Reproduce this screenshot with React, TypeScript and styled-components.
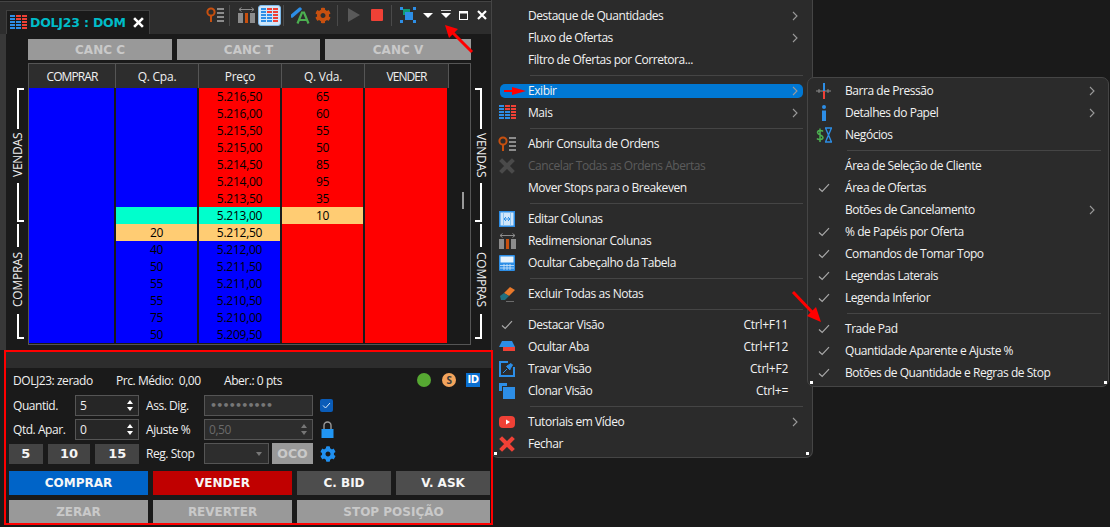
import React from "react";
import styled, { createGlobalStyle } from "styled-components";
import { FaCog } from "react-icons/fa";

const UI_FONT = `"Open Sans", "Noto Sans", sans-serif`;
const BOLD_FONT = `"DejaVu Sans", Verdana, sans-serif`;

const GlobalStyle = createGlobalStyle`
    html, body {
        margin: 0;
        padding: 0;
        background: #1a1a1a;
    }
    * {
        box-sizing: border-box;
    }
`;

const Desktop = styled.div`
    position: relative;
    width: 1110px;
    height: 527px;
    overflow: hidden;
    background: #1a1a1a;
    color: #f2f2f2;
    font-family: ${UI_FONT};
    font-size: 12px;
    letter-spacing: -0.45px;
`;

const Window = styled.div`
    width: 493px;
    display: flex;
    flex-direction: column;
`;

const TitleBar = styled.div`
    height: 34px;
    display: flex;
    align-items: flex-end;
    padding-left: 6px;
    background: #2d2d2d;
    border-top: 1px solid #1c1c1c;
    box-shadow: inset 0 1px 0 #444444;
`;

const Tab = styled.div`
    width: 144px;
    height: 24px;
    display: flex;
    align-items: center;
    padding-left: 3px;
    gap: 3px;
    background: #1a1a1a;
    border: 1px solid #3f3f3f;
    border-bottom: none;
    color: #00bcc8;
    font-family: ${BOLD_FONT};
    font-weight: 700;
    font-size: 12.5px;
    letter-spacing: -0.2px;
    white-space: nowrap;
`;

const TabClose = styled.span`
    display: flex;
    margin-left: 4px;
`;

const Toolbar = styled.div`
    display: flex;
    align-items: center;
    height: 33px;
    margin-left: 54px;
    padding-bottom: 5px;
`;

const ToolSlot = styled.div<{ $w: number; $active?: boolean }>`
    width: ${(p) => p.$w}px;
    height: 21px;
    flex: none;
    display: flex;
    align-items: center;
    justify-content: center;
    border-radius: 3px;
    ${(p) => p.$active && "background: #cfe6fa; border: 1px solid #7db8e8;"}
`;

const ToolSep = styled.div<{ $w: number }>`
    width: ${(p) => p.$w}px;
    flex: none;
    height: 21px;
    display: flex;
    justify-content: center;

    &::after {
        content: "";
        width: 1px;
        background: #4a4a4a;
    }
`;

const DomArea = styled.div`
    height: 316px;
    display: flex;
    border-left: 6px solid #383838;
    padding-left: 2px;
    background: #1a1a1a;
`;

const Legend = styled.div<{ $w: number }>`
    width: ${(p) => p.$w}px;
    flex: none;
    padding-top: 54px;
    display: flex;
    flex-direction: column;
    align-items: center;
`;

const LegendBar = styled.div<{ $h: number; $foot?: string; $side: "left" | "right" }>`
    position: relative;
    width: 2px;
    height: ${(p) => p.$h}px;
    background: #ffffff;

    ${(p) =>
        p.$foot &&
        `&::after {
            content: "";
            position: absolute;
            ${p.$foot}: 0;
            ${p.$side === "left" ? "left: 0" : "right: 0"};
            width: 7px;
            height: 2px;
            background: #ffffff;
        }`}
`;

const LegendText = styled.div<{ $flip?: boolean; $h: number }>`
    writing-mode: vertical-rl;
    height: ${(p) => p.$h}px;
    margin: 4px 0 6px;
    line-height: 12px;
    text-align: center;
    white-space: nowrap;
    letter-spacing: -0.25px;
    color: #f0f0f0;
    ${(p) => p.$flip && "transform: rotate(180deg);"}
`;

const LegendGap = styled.div`
    height: 2px;
    flex: none;
`;

const Center = styled.div`
    width: 443px;
    flex: none;
    padding-top: 5px;
    display: flex;
    flex-direction: column;
`;

const CancelRow = styled.div`
    display: flex;
    gap: 5px;
    height: 21px;
    margin-bottom: 3px;
`;

const CancelButton = styled.div<{ $w: number }>`
    width: ${(p) => p.$w}px;
    display: flex;
    align-items: center;
    justify-content: center;
    background: #999999;
    color: #c9c9c9;
    font-family: ${BOLD_FONT};
    font-weight: 700;
    font-size: 12px;
    letter-spacing: 0;
`;

const Table = styled.div`
    height: 282px;
    border: 1px solid #555555;
    display: grid;
    grid-template-columns: 87px 83px 83px 83px 84px 1fr;
    grid-template-rows: 24px repeat(15, 17px);
`;

const HeadCell = styled.div<{ $plain?: boolean; $caps?: boolean }>`
    display: flex;
    align-items: center;
    justify-content: center;
    background: ${(p) => (p.$plain ? "#1a1a1a" : "#2d2d2d")};
    border-right: 1px solid ${(p) => (p.$plain ? "transparent" : "#555555")};
    color: #f0f0f0;
    letter-spacing: ${(p) => (p.$caps ? "-0.9px" : "-0.25px")};
`;

const DataCell = styled.div<{ $bg: string; $gap?: number }>`
    display: flex;
    align-items: center;
    justify-content: center;
    background: ${(p) => p.$bg};
    background-clip: padding-box;
    border-right: ${(p) => p.$gap ?? 2}px solid #1a1a1a;
    color: #000000;
    line-height: 17px;
    letter-spacing: -0.25px;
`;

const ScrollTrack = styled.div`
    grid-column: 6;
    grid-row: 2 / 17;
    padding: 104px 0 0 13px;
`;

const ScrollHandle = styled.div`
    width: 2px;
    height: 17px;
    background: #999999;
`;

const TradePad = styled.div`
    position: relative;
    z-index: 3;
    width: 489px;
    height: 175px;
    margin-left: 4px;
    border: 2px solid #ff0000;
    display: flex;
    flex-direction: column;
`;

const PadHeader = styled.div`
    height: 16px;
    flex: none;
    background: #2d2d2d;
`;

const StatusRow = styled.div`
    height: 24px;
    flex: none;
    display: flex;
    align-items: center;
    padding: 0 11px 0 7px;
`;

const StatusText = styled.span<{ $w: number }>`
    width: ${(p) => p.$w}px;
    white-space: nowrap;
    color: #f0f0f0;
`;

const StatusIcons = styled.div`
    margin-left: auto;
    display: flex;
    align-items: center;
    gap: 10px;
`;

const GreenDot = styled.div`
    width: 14px;
    height: 14px;
    border-radius: 50%;
    background: #56a832;
`;

const CoinDot = styled.div`
    width: 14px;
    height: 14px;
    border-radius: 50%;
    background: #f3a45c;
    color: #3b3b3b;
    font-size: 10px;
    font-weight: 700;
    line-height: 14px;
    text-align: center;
    margin-left: 1px;
`;

const IdBadge = styled.div`
    width: 14px;
    height: 14px;
    background: #0a6fd0;
    color: #ffffff;
    font-family: ${BOLD_FONT};
    font-size: 10px;
    font-weight: 700;
    line-height: 14px;
    text-align: center;
`;

const FormGrid = styled.div`
    margin-top: 3px;
    padding-left: 7px;
    display: grid;
    grid-template-columns: 62px 64px 7px 58px 109px 7px 20px;
    grid-template-rows: repeat(3, 21px);
    row-gap: 3px;
    align-items: center;
`;

const FieldLabel = styled.div<{ $col: number }>`
    grid-column: ${(p) => p.$col};
    white-space: nowrap;
    color: #f0f0f0;
`;

const Field = styled.div<{ $col?: number; $disabled?: boolean }>`
    grid-column: ${(p) => p.$col ?? "auto"};
    height: 21px;
    display: flex;
    align-items: center;
    justify-content: space-between;
    padding: 0 4px;
    background: ${(p) => (p.$disabled ? "#2d2d2d" : "#262626")};
    border: 1px solid #555555;
    color: ${(p) => (p.$disabled ? "#6a6a6a" : "#f0f0f0")};
`;

const PasswordDots = styled.span`
    padding-left: 1px;
    color: #777777;
    font-family: ${BOLD_FONT};
    font-size: 11px;
    font-weight: 700;
    letter-spacing: -0.8px;
    line-height: 1;
`;

const SpinArrows = styled.div`
    display: flex;
    flex-direction: column;
    gap: 3px;
    margin-right: 1px;
`;

const SpinArrow = styled.div<{ $down?: boolean; $dim?: boolean }>`
    width: 0;
    height: 0;
    border-left: 3.5px solid transparent;
    border-right: 3.5px solid transparent;
    ${(p) =>
        p.$down
            ? `border-top: 4px solid ${p.$dim ? "#777777" : "#ffffff"};`
            : `border-bottom: 4px solid ${p.$dim ? "#777777" : "#ffffff"};`}
`;

const QuickRow = styled.div`
    grid-column: 1 / 3;
    margin-left: -4px;
    display: flex;
    gap: 5px;
    height: 20px;
`;

const QuickButton = styled.div<{ $w: number }>`
    width: ${(p) => p.$w}px;
    display: flex;
    align-items: center;
    justify-content: center;
    background: #444444;
    color: #f4f4f4;
    font-family: ${BOLD_FONT};
    font-weight: 700;
    font-size: 13px;
    letter-spacing: 0;
`;

const StopWrap = styled.div`
    grid-column: 5;
    display: flex;
    gap: 3px;
    height: 21px;
`;

const SelectBox = styled.div`
    width: 65px;
    display: flex;
    align-items: center;
    justify-content: flex-end;
    padding-right: 6px;
    background: #2d2d2d;
    border: 1px solid #555555;
`;

const OcoButton = styled.div`
    flex: 1;
    display: flex;
    align-items: center;
    justify-content: center;
    background: #999999;
    color: #c9c9c9;
    font-family: ${BOLD_FONT};
    font-weight: 700;
    font-size: 12.5px;
    letter-spacing: 0;
`;

const ExtraSlot = styled.div<{ $pad?: number }>`
    grid-column: 7;
    display: flex;
    justify-content: flex-start;
    align-items: center;
    padding-left: ${(p) => p.$pad ?? 0}px;
`;

const CheckBox = styled.div`
    width: 13px;
    height: 13px;
    display: flex;
    align-items: center;
    justify-content: center;
    border-radius: 2px;
    background: #0a5cb8;
`;

const ActionRow = styled.div<{ $h: number; $top: number }>`
    display: flex;
    gap: 5px;
    height: ${(p) => p.$h}px;
    margin-top: ${(p) => p.$top}px;
    padding-left: 3px;
`;

const ActionButton = styled.div<{ $w: number; $bg: string; $fg?: string }>`
    width: ${(p) => p.$w}px;
    display: flex;
    align-items: center;
    justify-content: center;
    background: ${(p) => p.$bg};
    color: ${(p) => p.$fg ?? "#f6f6f6"};
    font-family: ${BOLD_FONT};
    font-weight: 700;
    font-size: 12px;
    letter-spacing: 0;
    white-space: nowrap;
`;

const Menu = styled.div`
    position: absolute;
    z-index: 2;
    left: 491px;
    top: 0;
    width: 322px;
    height: 458px;
    padding-top: 5px;
    background: #2b2b2b;
    border: 1px solid #454545;
    border-top: none;
    border-radius: 0 0 7px 7px;
`;

const SubMenu = styled.div`
    position: absolute;
    z-index: 2;
    left: 807px;
    top: 77px;
    width: 302px;
    height: 310px;
    padding-top: 2px;
    background: #2b2b2b;
    border: 1px solid #454545;
    border-radius: 7px;
`;

const CornerDot = styled.div<{ $right?: number; $left?: number }>`
    position: absolute;
    bottom: 2px;
    ${(p) => (p.$left !== undefined ? `left: ${p.$left}px;` : `right: ${p.$right}px;`)}
    width: 3px;
    height: 3px;
    background: #ffffff;
`;

const MenuItem = styled.div<{ $active?: boolean; $disabled?: boolean; $ml: number; $mr: number }>`
    position: relative;
    isolation: isolate;
    height: 22px;
    padding-bottom: 1px;
    margin: 0 ${(p) => p.$mr}px 0 ${(p) => p.$ml}px;
    display: flex;
    align-items: center;
    white-space: nowrap;
    color: ${(p) => (p.$disabled ? "#5c5c5c" : "#f2f2f2")};

    ${(p) =>
        p.$active &&
        `&::before {
            content: "";
            position: absolute;
            z-index: -1;
            inset: 4px 0;
            border-radius: 5px;
            background: #0078d4;
        }`}
`;

const IconSlot = styled.span`
    width: 14px;
    margin-right: 14px;
    flex: none;
    display: flex;
    align-items: center;
    justify-content: center;

    svg {
        flex: none;
    }
`;

const Shortcut = styled.span`
    margin-left: auto;
    margin-right: 15px;
    letter-spacing: -0.25px;
`;

const Chevron = styled.span`
    margin-left: auto;
    margin-right: 5px;
    display: flex;
`;

const Separator = styled.div<{ $ml: number; $mr: number }>`
    height: 9px;
    margin: 0 ${(p) => p.$mr}px 0 ${(p) => p.$ml}px;
    display: flex;
    align-items: center;

    &::after {
        content: "";
        flex: 1;
        height: 1px;
        background: #454545;
    }
`;

const ArrowLayer = styled.svg`
    position: absolute;
    z-index: 4;
    left: 0;
    top: 0;
    pointer-events: none;
`;

const BLUE = "#2d8ee6";
const RED = "#ef4136";
const ORANGE = "#c8500f";
const GREY = "#8c8c8c";

function TableIcon() {
    const rows = [0, 1, 2, 3, 4];
    return (
        <svg width="17" height="15" viewBox="0 0 17 15">
            {rows.map((r) => (
                <g key={r}>
                    <rect x="0" y={r * 3} width="5" height="2" fill={BLUE} />
                    <rect x="6" y={r * 3} width="5" height="2" fill={r < 2 ? RED : BLUE} />
                    <rect x="12" y={r * 3} width="5" height="2" fill={RED} />
                </g>
            ))}
        </svg>
    );
}

function OrdersIcon() {
    return (
        <svg width="18" height="16" viewBox="0 0 18 16">
            <circle cx="5" cy="5" r="3.6" fill="none" stroke={ORANGE} strokeWidth="2" />
            <rect x="4" y="8" width="2" height="7" fill={ORANGE} />
            <rect x="11" y="1" width="7" height="2" fill={GREY} />
            <rect x="11" y="5" width="7" height="2" fill={GREY} />
            <rect x="11" y="9" width="7" height="2" fill={GREY} />
            <rect x="11" y="13" width="7" height="2" fill={GREY} />
        </svg>
    );
}

function ResizeIcon() {
    return (
        <svg width="17" height="16" viewBox="0 0 17 16">
            <path d="M1 2.5H16M1 2.5l2.5-2M1 2.5l2.5 2M16 2.5l-2.5-2M16 2.5l-2.5 2" stroke={GREY} fill="none" />
            <rect x="0" y="6" width="5" height="10" fill={GREY} />
            <rect x="7" y="6" width="3" height="10" fill={ORANGE} />
            <rect x="12" y="6" width="5" height="10" fill={GREY} />
        </svg>
    );
}

function PenAIcon() {
    return (
        <svg width="19" height="17" viewBox="0 0 19 17">
            <path d="M1 9L9 2" stroke={BLUE} strokeWidth="3.4" strokeLinecap="round" />
            <path d="M6.5 16.5L11 5.5H13L17.5 16.5M8.5 13H15.5" stroke="#4caf50" strokeWidth="2.2" fill="none" />
        </svg>
    );
}

function PlayIcon() {
    return (
        <svg width="12" height="14" viewBox="0 0 12 14">
            <polygon points="0,0 12,7 0,14" fill="#595959" />
        </svg>
    );
}

function StopIcon() {
    return (
        <svg width="12" height="12" viewBox="0 0 12 12">
            <rect width="12" height="12" rx="1" fill={RED} />
        </svg>
    );
}

function SelectIcon() {
    return (
        <svg width="16" height="16" viewBox="0 0 16 16">
            <rect x="0" y="0" width="3" height="3" fill={BLUE} />
            <rect x="13" y="0" width="3" height="3" fill={BLUE} />
            <rect x="0" y="13" width="3" height="3" fill={BLUE} />
            <rect x="13" y="13" width="3" height="3" fill={BLUE} />
            <rect x="3" y="2" width="7" height="6" fill="#0f9d76" />
            <rect x="5" y="5" width="8" height="8" fill={BLUE} />
        </svg>
    );
}

function Caret({ bar }: { bar?: boolean }) {
    return (
        <svg width="10" height="10" viewBox="0 0 10 10">
            {bar && <rect x="0" y="0" width="10" height="1" fill="#cfcfcf" />}
            <polygon points="0,3 10,3 5,8" fill="#ffffff" />
        </svg>
    );
}

function WindowIcon() {
    return (
        <svg width="9" height="9" viewBox="0 0 9 9">
            <rect width="9" height="9" fill="#ffffff" />
            <rect x="1" y="2.5" width="7" height="5.5" fill="#2d2d2d" />
        </svg>
    );
}

function CrossIcon({ size, color, weight }: { size: number; color: string; weight: number }) {
    return (
        <svg width={size} height={size} viewBox="0 0 10 10">
            <path d="M1 1L9 9M9 1L1 9" stroke={color} strokeWidth={weight} />
        </svg>
    );
}

function FilmIcon() {
    return (
        <svg width="16" height="16" viewBox="0 0 16 16">
            <rect x="0" y="0" width="16" height="16" fill={BLUE} />
            <rect x="1.5" y="1.5" width="13" height="13" fill="#cfe6fa" />
            <rect x="4" y="1.5" width="1" height="13" fill="#8cc4f2" />
            <rect x="11" y="1.5" width="1" height="13" fill="#8cc4f2" />
            <path d="M5 8h6M5 8l2-2M5 8l2 2M11 8l-2-2M11 8l-2 2" stroke={BLUE} fill="none" />
        </svg>
    );
}

function HeaderIcon() {
    return (
        <svg width="16" height="16" viewBox="0 0 16 16">
            <rect x="0" y="0" width="16" height="16" rx="1" fill={BLUE} />
            <rect x="1.5" y="1.5" width="13" height="6" fill="#e8f3fc" />
            <path d="M1 10.5H15M1 13H15M5 9V15M8 9V15M11 9V15" stroke="#cfe6fa" strokeWidth="0.8" />
        </svg>
    );
}

function EraserIcon() {
    return (
        <svg width="17" height="16" viewBox="0 0 17 16">
            <polygon points="5,7 11,1 16,4 10,10" fill="#e8782a" />
            <polygon points="1,10 5,7 10,10 6,14 2,14" fill="#22707f" />
            <rect x="7" y="15" width="8" height="1" fill="#6c6c6c" />
        </svg>
    );
}

function CheckIcon() {
    return (
        <svg width="12" height="10" viewBox="0 0 12 10">
            <path d="M1 5.5L4.2 8.5L11 1.2" stroke="#a8a8a8" strokeWidth="1.2" fill="none" />
        </svg>
    );
}

function HideTabIcon() {
    return (
        <svg width="16" height="11" viewBox="0 0 16 11">
            <polygon points="3,0 13,0 16,6 0,6" fill={BLUE} />
            <rect x="4" y="6" width="12" height="4" fill={RED} />
        </svg>
    );
}

function LockViewIcon() {
    return (
        <svg width="16" height="16" viewBox="0 0 16 16">
            <rect x="1" y="1" width="14" height="14" fill="none" stroke={BLUE} strokeWidth="2" />
            <rect x="9" y="0" width="7" height="6" fill="#2b2b2b" />
            <path d="M4 12L8 8M8 5l4-2.5 1.5 1.5L11 8v1L7.5 5.5z" fill={BLUE} stroke={BLUE} />
        </svg>
    );
}

function CloneIcon() {
    return (
        <svg width="16" height="16" viewBox="0 0 16 16">
            <rect x="0" y="0" width="8" height="8" fill={BLUE} />
            <rect x="3" y="3" width="13" height="13" fill="#2b2b2b" />
            <rect x="4" y="4" width="12" height="12" fill={BLUE} />
        </svg>
    );
}

function VideoIcon() {
    return (
        <svg width="16" height="12" viewBox="0 0 16 12">
            <rect width="16" height="12" rx="4" fill={RED} />
            <polygon points="7,3.5 11,6 7,8.5" fill="#ffffff" />
        </svg>
    );
}

function PressureIcon() {
    return (
        <svg width="16" height="16" viewBox="0 0 16 16">
            <path d="M0 8H15M3 6v4M12 6v4" stroke={GREY} />
            <rect x="7" y="0" width="2" height="8" fill={BLUE} />
            <rect x="7" y="8" width="2" height="8" fill={RED} />
        </svg>
    );
}

function InfoIcon() {
    return (
        <svg width="6" height="16" viewBox="0 0 6 16">
            <circle cx="3" cy="2" r="2" fill={BLUE} />
            <rect x="1" y="5.5" width="4" height="10.5" fill={BLUE} />
        </svg>
    );
}

function TradesIcon() {
    return (
        <svg width="16" height="16" viewBox="0 0 16 16">
            <path d="M7 4.5C6 3 1.5 3 1.5 5.5S7 8 7 10.5S2 13 1 11.5M4 1.5V15" stroke="#4caf50" strokeWidth="1.5" fill="none" />
            <path d="M9 1H16M9 15H16M9.5 1L15.5 15M15.5 1L9.5 15" stroke={BLUE} strokeWidth="1.4" fill="none" />
        </svg>
    );
}

function ChevronIcon() {
    return (
        <svg width="6" height="10" viewBox="0 0 6 10">
            <path d="M1 1L5 5L1 9" stroke="#9a9a9a" strokeWidth="1.1" fill="none" />
        </svg>
    );
}

function LockIcon() {
    return (
        <svg width="13" height="17" viewBox="0 0 13 17">
            <path d="M3 8V4.5a3.5 3.5 0 0 1 7 0V8" stroke="#9a9a9a" strokeWidth="1.4" fill="none" />
            <rect x="0.5" y="8" width="12" height="9" fill="#2196f3" />
        </svg>
    );
}

const ROWS: [string, string, string, string, string][] = [
    ["5.216,50", "", "65", "#ff0000", "#ff0000"],
    ["5.216,00", "", "60", "#ff0000", "#ff0000"],
    ["5.215,50", "", "55", "#ff0000", "#ff0000"],
    ["5.215,00", "", "50", "#ff0000", "#ff0000"],
    ["5.214,50", "", "85", "#ff0000", "#ff0000"],
    ["5.214,00", "", "95", "#ff0000", "#ff0000"],
    ["5.213,50", "", "35", "#ff0000", "#ff0000"],
    ["5.213,00", "", "10", "#00ffcc", "#ffcc73"],
    ["5.212,50", "20", "", "#ffcc73", "#ff0000"],
    ["5.212,00", "40", "", "#0000ff", "#ff0000"],
    ["5.211,50", "50", "", "#0000ff", "#ff0000"],
    ["5.211,00", "55", "", "#0000ff", "#ff0000"],
    ["5.210,50", "55", "", "#0000ff", "#ff0000"],
    ["5.210,00", "75", "", "#0000ff", "#ff0000"],
    ["5.209,50", "50", "", "#0000ff", "#ff0000"],
];

function cpaColor(i: number) {
    if (i === 7) return "#00ffcc";
    if (i === 8) return "#ffcc73";
    return "#0000ff";
}

type Entry =
    | { sep: true }
    | {
          sep?: false;
          label: string;
          icon?: React.ReactNode;
          sub?: boolean;
          key?: string;
          active?: boolean;
          disabled?: boolean;
      };

const check = <CheckIcon />;

const MENU: Entry[] = [
    { label: "Destaque de Quantidades", sub: true },
    { label: "Fluxo de Ofertas", sub: true },
    { label: "Filtro de Ofertas por Corretora..." },
    { sep: true },
    { label: "Exibir", sub: true, active: true },
    { label: "Mais", sub: true, icon: <TableIcon /> },
    { sep: true },
    { label: "Abrir Consulta de Ordens", icon: <OrdersIcon /> },
    { label: "Cancelar Todas as Ordens Abertas", disabled: true, icon: <CrossIcon size={16} color="#4a4a4a" weight={2.6} /> },
    { label: "Mover Stops para o Breakeven" },
    { sep: true },
    { label: "Editar Colunas", icon: <FilmIcon /> },
    { label: "Redimensionar Colunas", icon: <ResizeIcon /> },
    { label: "Ocultar Cabeçalho da Tabela", icon: <HeaderIcon /> },
    { sep: true },
    { label: "Excluir Todas as Notas", icon: <EraserIcon /> },
    { sep: true },
    { label: "Destacar Visão", key: "Ctrl+F11", icon: check },
    { label: "Ocultar Aba", key: "Ctrl+F12", icon: <HideTabIcon /> },
    { label: "Travar Visão", key: "Ctrl+F2", icon: <LockViewIcon /> },
    { label: "Clonar Visão", key: "Ctrl+=", icon: <CloneIcon /> },
    { sep: true },
    { label: "Tutoriais em Vídeo", sub: true, icon: <VideoIcon /> },
    { label: "Fechar", icon: <CrossIcon size={16} color={RED} weight={2.6} /> },
];

const SUBMENU: Entry[] = [
    { label: "Barra de Pressão", sub: true, icon: <PressureIcon /> },
    { label: "Detalhes do Papel", sub: true, icon: <InfoIcon /> },
    { label: "Negócios", icon: <TradesIcon /> },
    { sep: true },
    { label: "Área de Seleção de Cliente" },
    { label: "Área de Ofertas", icon: check },
    { label: "Botões de Cancelamento", sub: true },
    { label: "% de Papéis por Oferta", icon: check },
    { label: "Comandos de Tomar Topo", icon: check },
    { label: "Legendas Laterais", icon: check },
    { label: "Legenda Inferior", icon: check },
    { sep: true },
    { label: "Trade Pad", icon: check },
    { label: "Quantidade Aparente e Ajuste %", icon: check },
    { label: "Botões de Quantidade e Regras de Stop", icon: check },
];

function MenuEntries({ items, ml, mr, sepMl, sepMr }: { items: Entry[]; ml: number; mr: number; sepMl: number; sepMr: number }) {
    return (
        <>
            {items.map((item, i) =>
                item.sep ? (
                    <Separator key={i} $ml={sepMl} $mr={sepMr} />
                ) : (
                    <MenuItem key={i} $ml={ml} $mr={mr} $active={item.active} $disabled={item.disabled}>
                        <IconSlot>{item.icon}</IconSlot>
                        {item.label}
                        {item.key && <Shortcut>{item.key}</Shortcut>}
                        {item.sub && (
                            <Chevron>
                                <ChevronIcon />
                            </Chevron>
                        )}
                    </MenuItem>
                )
            )}
        </>
    );
}

function SideLegend({ side, width }: { side: "left" | "right"; width: number }) {
    const flip = side === "left";
    return (
        <Legend $w={width}>
            <LegendBar $h={41} $side={side} $foot="top" />
            <LegendText $flip={flip} $h={44}>VENDAS</LegendText>
            <LegendBar $h={39} $side={side} $foot="bottom" />
            <LegendGap />
            <LegendBar $h={23} $side={side} />
            <LegendText $flip={flip} $h={57}>COMPRAS</LegendText>
            <LegendBar $h={25} $side={side} $foot="bottom" />
        </Legend>
    );
}

export default function App() {
    return (
        <Desktop>
            <GlobalStyle />
            <Window>
                <TitleBar>
                    <Tab>
                        <TableIcon />
                        DOLJ23 : DOM
                        <TabClose>
                            <CrossIcon size={11} color="#ffffff" weight={2.4} />
                        </TabClose>
                    </Tab>
                    <Toolbar>
                        <ToolSlot $w={21}><OrdersIcon /></ToolSlot>
                        <ToolSep $w={9} />
                        <ToolSlot $w={24}><ResizeIcon /></ToolSlot>
                        <ToolSlot $w={23} $active><TableIcon /></ToolSlot>
                        <ToolSep $w={5} />
                        <ToolSlot $w={29}><PenAIcon /></ToolSlot>
                        <ToolSlot $w={16}><FaCog size={17} color={ORANGE} /></ToolSlot>
                        <ToolSep $w={13} />
                        <ToolSlot $w={20}><PlayIcon /></ToolSlot>
                        <ToolSlot $w={26}><StopIcon /></ToolSlot>
                        <ToolSep $w={3} />
                        <ToolSlot $w={30}><SelectIcon /></ToolSlot>
                        <ToolSlot $w={10}><Caret /></ToolSlot>
                        <ToolSlot $w={25}><Caret bar /></ToolSlot>
                        <ToolSlot $w={10}><WindowIcon /></ToolSlot>
                        <ToolSlot $w={9} />
                        <ToolSlot $w={10}><CrossIcon size={10} color="#ffffff" weight={2.2} /></ToolSlot>
                    </Toolbar>
                </TitleBar>

                <DomArea>
                    <SideLegend side="left" width={20} />
                    <Center>
                        <CancelRow>
                            <CancelButton $w={144}>CANC C</CancelButton>
                            <CancelButton $w={143}>CANC T</CancelButton>
                            <CancelButton $w={146}>CANC V</CancelButton>
                        </CancelRow>
                        <Table>
                            <HeadCell $caps>COMPRAR</HeadCell>
                            <HeadCell>Q. Cpa.</HeadCell>
                            <HeadCell>Preço</HeadCell>
                            <HeadCell>Q. Vda.</HeadCell>
                            <HeadCell $caps>VENDER</HeadCell>
                            <HeadCell $plain />
                            <ScrollTrack>
                                <ScrollHandle />
                            </ScrollTrack>
                            {ROWS.map((r, i) => (
                                <React.Fragment key={r[0]}>
                                    <DataCell $bg="#0000ff" />
                                    <DataCell $bg={cpaColor(i)}>{r[1]}</DataCell>
                                    <DataCell $bg={r[3]}>{r[0]}</DataCell>
                                    <DataCell $bg={r[4]}>{r[2]}</DataCell>
                                    <DataCell $bg="#ff0000" />
                                </React.Fragment>
                            ))}
                        </Table>
                    </Center>
                    <SideLegend side="right" width={19} />
                </DomArea>

                <TradePad>
                    <PadHeader />
                    <StatusRow>
                        <StatusText $w={103}>DOLJ23: zerado</StatusText>
                        <StatusText $w={108}>Prc. Médio:&nbsp; 0,00</StatusText>
                        <StatusText $w={70}>Aber.: 0 pts</StatusText>
                        <StatusIcons>
                            <GreenDot />
                            <CoinDot>S</CoinDot>
                            <IdBadge>ID</IdBadge>
                        </StatusIcons>
                    </StatusRow>
                    <FormGrid>
                        <FieldLabel $col={1}>Quantid.</FieldLabel>
                        <Field $col={2}>
                            5
                            <SpinArrows>
                                <SpinArrow />
                                <SpinArrow $down />
                            </SpinArrows>
                        </Field>
                        <FieldLabel $col={4}>Ass. Dig.</FieldLabel>
                        <Field $col={5} $disabled>
                            <PasswordDots>••••••••••</PasswordDots>
                        </Field>
                        <ExtraSlot>
                            <CheckBox>
                                <svg width="9" height="7" viewBox="0 0 9 7">
                                    <path d="M1 3.5L3.5 6L8 1" stroke="#d8e8f8" fill="none" />
                                </svg>
                            </CheckBox>
                        </ExtraSlot>

                        <FieldLabel $col={1}>Qtd. Apar.</FieldLabel>
                        <Field $col={2}>
                            0
                            <SpinArrows>
                                <SpinArrow />
                                <SpinArrow $down />
                            </SpinArrows>
                        </Field>
                        <FieldLabel $col={4}>Ajuste %</FieldLabel>
                        <Field $col={5} $disabled>
                            0,50
                            <SpinArrows>
                                <SpinArrow $dim />
                                <SpinArrow $down $dim />
                            </SpinArrows>
                        </Field>
                        <ExtraSlot $pad={1}>
                            <LockIcon />
                        </ExtraSlot>

                        <QuickRow>
                            <QuickButton $w={34}>5</QuickButton>
                            <QuickButton $w={43}>10</QuickButton>
                            <QuickButton $w={44}>15</QuickButton>
                        </QuickRow>
                        <FieldLabel $col={4}>Reg. Stop</FieldLabel>
                        <StopWrap>
                            <SelectBox>
                                <SpinArrow $down $dim />
                            </SelectBox>
                            <OcoButton>OCO</OcoButton>
                        </StopWrap>
                        <ExtraSlot>
                            <FaCog size={16} color="#2090f0" />
                        </ExtraSlot>
                    </FormGrid>
                    <ActionRow $h={24} $top={7}>
                        <ActionButton $w={139} $bg="#0064c8">COMPRAR</ActionButton>
                        <ActionButton $w={139} $bg="#c00000">VENDER</ActionButton>
                        <ActionButton $w={94} $bg="#4d4d4d">C. BID</ActionButton>
                        <ActionButton $w={94} $bg="#4d4d4d">V. ASK</ActionButton>
                    </ActionRow>
                    <ActionRow $h={23} $top={5}>
                        <ActionButton $w={139} $bg="#999999" $fg="#c9c9c9">ZERAR</ActionButton>
                        <ActionButton $w={139} $bg="#999999" $fg="#c9c9c9">REVERTER</ActionButton>
                        <ActionButton $w={193} $bg="#999999" $fg="#c9c9c9">STOP POSIÇÃO</ActionButton>
                    </ActionRow>
                </TradePad>
            </Window>

            <Menu>
                <MenuEntries items={MENU} ml={8} mr={9} sepMl={38} sepMr={9} />
                <CornerDot $left={2} />
                <CornerDot $right={3} />
            </Menu>

            <SubMenu>
                <MenuEntries items={SUBMENU} ml={9} mr={8} sepMl={39} sepMr={7} />
                <CornerDot $left={2} />
                <CornerDot $right={1} />
            </SubMenu>

            <ArrowLayer width="1110" height="527" viewBox="0 0 1110 527">
                <path d="M472 52L452 32" stroke="#ff0000" strokeWidth="3" />
                <polygon points="445,25 458,29 449,38" fill="#ff0000" />
                <path d="M504 91H514" stroke="#ff0000" strokeWidth="2" />
                <polygon points="526,91 512,87 512,95" fill="#ff0000" />
                <path d="M793 292L812 312" stroke="#ff0000" strokeWidth="3" />
                <polygon points="821,322 807,316 816,307" fill="#ff0000" />
            </ArrowLayer>
        </Desktop>
    );
}
